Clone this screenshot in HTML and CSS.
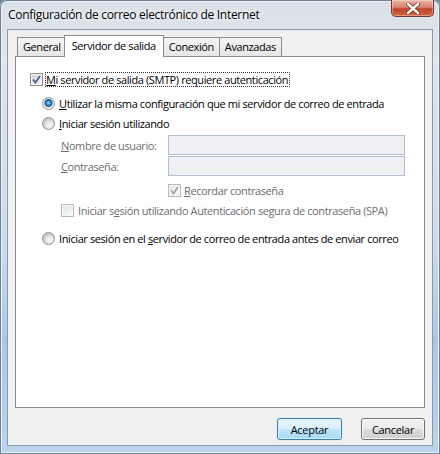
FILE: index.html
```html
<!DOCTYPE html>
<html lang="es">

<head>
  <meta charset="UTF-8" />
  <title>Configuración de correo electrónico de Internet</title>
  <link rel="stylesheet" href="styles.css">
</head>

<body>
  <div class="window">
    <div class="titlebar">
      <span class="title">Configuración de correo electrónico de Internet</span>
      <span class="close">
        <svg width="14" height="11" viewBox="0 0 14 11">
          <path d="M2 1 L12 10 M12 1 L2 10" stroke="#6b2a1e" stroke-width="4" stroke-linecap="round" />
          <path d="M2 1 L12 10 M12 1 L2 10" stroke="#fff" stroke-width="2.4" stroke-linecap="round" />
        </svg>
      </span>
    </div>

    <div class="client">
      <div class="tabs">
        <span class="tab">General</span>
        <span class="tab active">Servidor de salida</span>
        <span class="tab">Conexión</span>
        <span class="tab">Avanzadas</span>
      </div>

      <div class="panel">
        <div class="row smtp">
          <span class="check">
            <svg width="9" height="9" viewBox="0 0 9 9"><path d="M1 4.5 L3.5 7.5 L8 1" stroke="#4a5e8c" stroke-width="1.7" fill="none" /></svg>
          </span>
          <span class="focus"><u>M</u>i servidor de salida (SMTP) requiere autenticación</span>
        </div>

        <div class="options">
          <div class="row">
            <span class="radio on"></span>
            <span><u>U</u>tilizar la misma configuración que mi servidor de correo de entrada</span>
          </div>
          <div class="row">
            <span class="radio"></span>
            <span><u>I</u>niciar sesión utilizando</span>
          </div>

          <div class="login">
            <div class="field-row">
              <span class="label"><u>N</u>ombre de usuario:</span>
              <span class="field"></span>
            </div>
            <div class="field-row">
              <span class="label"><u>C</u>ontraseña:</span>
              <span class="field"></span>
            </div>
            <div class="row disabled remember">
              <span class="check">
                <svg width="9" height="9" viewBox="0 0 9 9"><path d="M1 4.5 L3.5 7.5 L8 1" stroke="#a6a6a6" stroke-width="1.7" fill="none" /></svg>
              </span>
              <span><u>R</u>ecordar contraseña</span>
            </div>
            <div class="row disabled spa">
              <span class="check"></span>
              <span>Iniciar s<u>e</u>sión utilizando Autenticación segura de contraseña (SPA)</span>
            </div>
          </div>

          <div class="row before">
            <span class="radio"></span>
            <span>Iniciar sesión en el <u>s</u>ervidor de correo de entrada antes de enviar correo</span>
          </div>
        </div>
      </div>

      <div class="buttons">
        <button class="btn default">Aceptar</button>
        <button class="btn">Cancelar</button>
      </div>
    </div>
  </div>
</body>

</html>
```

FILE: styles.css
```css
html,
body {
  margin: 0;
  padding: 0;
  width: 440px;
  height: 454px;
  overflow: hidden;
}

body {
  font-family: "Open Sans", "Noto Sans", sans-serif;
  font-size: 11px;
  letter-spacing: -0.4px;
  color: #000;
  background: #6f8aa6;
}

.window {
  box-sizing: border-box;
  height: 454px;
  display: flex;
  flex-direction: column;
  padding: 0 7px 8px 7px;
  border-radius: 7px 7px 0 0;
  background: linear-gradient(to bottom, #d9e0e7 0, #dfe6ec 60px, #c9dbee 250px, #a9c8e8 340px, #b9d4ee 454px);
  box-shadow: inset 0 0 0 1px #6f8094, inset 0 0 0 2px #eef3f8;
}

/* Title bar */
.titlebar {
  flex: none;
  height: 29px;
  display: flex;
  justify-content: space-between;
  align-items: flex-start;
}

.title {
  padding: 6px 0 0 1px;
  font-size: 12px;
  letter-spacing: -0.3px;
  text-shadow: 0 0 6px #fff, 0 0 3px #fff;
}

.close {
  width: 43px;
  height: 17px;
  box-sizing: border-box;
  margin-right: -1px;
  display: flex;
  align-items: center;
  justify-content: center;
  border: 1px solid #6e3a31;
  border-top: none;
  border-radius: 0 0 5px 5px;
  background: linear-gradient(to bottom, #e9b2a4 0, #d88470 45%, #c2432a 55%, #d1653f 100%);
  box-shadow: inset 0 0 0 1px rgba(255, 255, 255, 0.35);
}

/* Client area */
.client {
  flex: 1;
  display: flex;
  flex-direction: column;
  padding: 5px 7px 0 7px;
  background: #f0f0f0;
  border: 1px solid #8d99a6;
}

.tabs {
  flex: none;
  display: flex;
  align-items: flex-end;
  height: 21px;
  padding-left: 2px;
}

.tab {
  height: 18px;
  line-height: 17px;
  padding: 0 5px;
  border: 1px solid #898c95;
  border-bottom: none;
  margin-right: -1px;
  background: linear-gradient(to bottom, #f4f4f4, #e6e6e6);
}

.tab.active {
  position: relative;
  z-index: 1;
  height: 21px;
  line-height: 19px;
  padding: 0 7px;
  margin: 0 -1px -1px -2px;
  background: #fff;
}

.tab.active + .tab {
  margin-left: 0;
}

.panel {
  flex: none;
  box-sizing: border-box;
  height: 352px;
  background: #fff;
  border: 1px solid #898c95;
  padding: 15px 0 0 14px;
}

.row {
  display: flex;
  align-items: center;
  gap: 3px;
  height: 20px;
}

.smtp {
  height: 14px;
}

.focus {
  outline: 1px dotted #333;
  outline-offset: 0;
  line-height: 13px;
  padding: 0 1px 0 0;
}

.options {
  padding: 7px 0 0 12px;
}

.options > .row {
  gap: 4px;
}

.disabled {
  color: #6d6d6d;
}

/* Username / password block */
.login {
  padding: 2px 0 0 19px;
}

.field-row {
  display: flex;
  align-items: center;
  height: 20px;
  margin-bottom: 1px;
}

.label {
  width: 107px;
  color: #6d6d6d;
}

.field {
  width: 237px;
  height: 20px;
  box-sizing: border-box;
  border: 1px solid #b4c0cd;
  background: #eef0f3;
}

.remember {
  margin: 4px 0 0 107px;
}

.spa {
  gap: 4px;
}

.before {
  margin-top: 8px;
}

/* Checkbox and radio */
.check {
  flex: none;
  box-sizing: border-box;
  width: 13px;
  height: 13px;
  padding: 1px;
  border: 1px solid #8f8f8f;
  display: flex;
  align-items: center;
  justify-content: center;
  background: linear-gradient(135deg, #cdd1d6, #f7f7f7) content-box, #f4f4f4;
}

.disabled .check {
  border-color: #b8b8b8;
  background: linear-gradient(135deg, #e4e4e4, #f7f7f7) content-box, #f7f7f7;
}

.radio {
  flex: none;
  box-sizing: border-box;
  width: 13px;
  height: 13px;
  border-radius: 50%;
  border: 1px solid #8f8f8f;
  background: radial-gradient(circle at 60% 65%, #fafafa 0, #dfe2e5 4px, #c6cace 6px);
}

.radio.on {
  background: radial-gradient(circle at 50% 45%, #a8ecff 0, #3aa5ea 1.5px, #17558f 3.5px, #dfe5ea 4.5px, #f4f4f4 6px);
}

/* Buttons */
.buttons {
  display: flex;
  justify-content: flex-end;
  gap: 19px;
  padding-top: 10px;
}

.btn {
  width: 64px;
  height: 22px;
  padding: 0;
  font-family: inherit;
  font-size: 11px;
  letter-spacing: -0.3px;
  color: #000;
  border: 1px solid #707070;
  border-radius: 3px;
  background: linear-gradient(to bottom, #f2f2f2 0, #ebebeb 50%, #dddddd 50%, #cfcfcf 100%);
  box-shadow: inset 0 0 0 1px #fafafa;
}

.btn.default {
  width: 65px;
  border-color: #3c7fb1;
  background: linear-gradient(to bottom, #eaf6fd 0, #d9f0fc 50%, #bee6fd 50%, #a7d9f5 100%);
  box-shadow: inset 0 0 0 1px #d5f0ff, 0 0 1px #7fc6ef;
}
```
